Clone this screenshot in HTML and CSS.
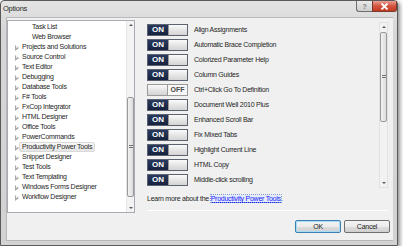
FILE: index.html
```html
<!DOCTYPE html>
<html>
<head>
<meta charset="utf-8">
<link rel="stylesheet" href="styles.css">
</head>
<body>
<div class="window">
  <div class="titlebar">
    <span class="title">Options</span>
    <div class="caption">
      <div class="cbtn help">?</div>
      <div class="cbtn close">
        <svg width="9" height="7" viewBox="0 0 9 7"><path d="M1.5 0.5 L7.5 6.5 M7.5 0.5 L1.5 6.5" stroke="#fff" stroke-width="1.8"/></svg>
      </div>
    </div>
  </div>
  <div class="client">
    <div class="main">
      <div class="tree">
        <ul class="items">
          <li class="leaf">Task List</li>
          <li class="leaf">Web Browser</li>
          <li class="node"><i class="arr"></i>Projects and Solutions</li>
          <li class="node"><i class="arr"></i>Source Control</li>
          <li class="node"><i class="arr"></i>Text Editor</li>
          <li class="node"><i class="arr"></i>Debugging</li>
          <li class="node"><i class="arr"></i>Database Tools</li>
          <li class="node"><i class="arr"></i>F# Tools</li>
          <li class="node"><i class="arr"></i>FxCop Integrator</li>
          <li class="node"><i class="arr"></i>HTML Designer</li>
          <li class="node"><i class="arr"></i>Office Tools</li>
          <li class="node"><i class="arr"></i>PowerCommands</li>
          <li class="node"><i class="arr"></i><span class="sel">Productivity Power Tools</span></li>
          <li class="node"><i class="arr"></i>Snippet Designer</li>
          <li class="node"><i class="arr"></i>Test Tools</li>
          <li class="node"><i class="arr"></i>Text Templating</li>
          <li class="node"><i class="arr"></i>Windows Forms Designer</li>
          <li class="node"><i class="arr"></i>Workflow Designer</li>
        </ul>
        <div class="vscroll tree-scroll">
          <div class="sarrow"><i class="up"></i></div>
          <div class="track"><div class="thumb"><i class="grip"></i></div></div>
          <div class="sarrow"><i class="down"></i></div>
        </div>
      </div>
      <div class="pane">
        <div class="panel">
          <div class="list">
            <div class="row"><span class="toggle"><b class="on">ON</b><span class="knob"></span></span><span class="lbl">Align Assignments</span></div>
            <div class="row"><span class="toggle"><b class="on">ON</b><span class="knob"></span></span><span class="lbl">Automatic Brace Completion</span></div>
            <div class="row"><span class="toggle"><b class="on">ON</b><span class="knob"></span></span><span class="lbl">Colorized Parameter Help</span></div>
            <div class="row"><span class="toggle"><b class="on">ON</b><span class="knob"></span></span><span class="lbl">Column Guides</span></div>
            <div class="row"><span class="toggle is-off"><span class="knob"></span><b class="off">OFF</b></span><span class="lbl">Ctrl+Click Go To Definition</span></div>
            <div class="row"><span class="toggle"><b class="on">ON</b><span class="knob"></span></span><span class="lbl">Document Well 2010 Plus</span></div>
            <div class="row"><span class="toggle"><b class="on">ON</b><span class="knob"></span></span><span class="lbl">Enhanced Scroll Bar</span></div>
            <div class="row"><span class="toggle"><b class="on">ON</b><span class="knob"></span></span><span class="lbl">Fix Mixed Tabs</span></div>
            <div class="row"><span class="toggle"><b class="on">ON</b><span class="knob"></span></span><span class="lbl">Highlight Current Line</span></div>
            <div class="row"><span class="toggle"><b class="on">ON</b><span class="knob"></span></span><span class="lbl">HTML Copy</span></div>
            <div class="row"><span class="toggle"><b class="on">ON</b><span class="knob"></span></span><span class="lbl">Middle-click scrolling</span></div>
          </div>
          <div class="vscroll pane-scroll">
            <div class="sarrow"><i class="up"></i></div>
            <div class="track"><div class="thumb"><i class="grip"></i></div></div>
            <div class="sarrow"><i class="down"></i></div>
          </div>
        </div>
        <p class="learn">Learn more about the <a class="link" href="#">Productivity Power Tools</a>.</p>
        <div class="sep"></div>
      </div>
    </div>
    <div class="footer">
      <button class="btn default">OK</button>
      <button class="btn">Cancel</button>
    </div>
  </div>
</div>
</body>
</html>
```

FILE: styles.css
```css
* { box-sizing: border-box; }
html, body { margin: 0; padding: 0; background: #ffffff; }
body {
  font-family: "Liberation Sans", Arial, sans-serif;
  font-size: 7px;
  letter-spacing: -0.25px;
  color: #1e1e1e;
}
.window {
  width: 398px;
  height: 246px;
  border: 1px solid #5a5a5a;
  border-radius: 4px 4px 0 0;
  background: linear-gradient(#e4e4e4, #d6d6d6 30px, #d2d2d2);
  box-shadow: 2px 2px 4px rgba(0,0,0,0.45);
  padding: 0 4px 4px 5px;
  display: flex;
  flex-direction: column;
}
.titlebar {
  height: 16px;
  display: flex;
  justify-content: space-between;
  margin-right: -4px;
  flex: none;
}
.title {
  align-self: center;
  margin-left: -3px;
  padding-bottom: 1px;
  font-size: 7.5px;
  color: #2a2a2a;
}
.caption { display: flex; align-self: flex-start; }
.cbtn {
  height: 11px;
  border: 1px solid #6d6d6d;
  border-top: none;
  display: flex;
  align-items: center;
  justify-content: center;
}
.help {
  width: 16px;
  border-radius: 0 0 0 3px;
  border-right: none;
  background: linear-gradient(#e9e9e9, #cfcfcf);
  color: #7b7b7b;
  font-size: 7px;
  font-weight: bold;
}
.close {
  width: 25px;
  border-radius: 0 0 3px 0;
  background: linear-gradient(#e8a094, #d5543f 50%, #c23a22);
  border-color: #7a3a30;
}
.client {
  flex: 1;
  background: #f0f0f0;
  border: 1px solid #b8b8b8;
  border-right: none;
  padding: 2px 3px 0 0;
  display: flex;
  flex-direction: column;
}
.main { display: flex; }
.tree {
  width: 128px;
  height: 193px;
  background: #ffffff;
  border: 1px solid #a8abb2;
  display: flex;
}
.items {
  list-style: none;
  margin: 0;
  padding: 1px 0 0 0;
  flex: 1;
}
.items li {
  height: 10px;
  line-height: 10px;
  white-space: nowrap;
  display: flex;
  align-items: center;
  color: #262626;
}
.leaf { padding-left: 24px; }
.node { padding-left: 7px; }
.arr {
  width: 7px;
  height: 10px;
  flex: none;
  position: relative;
}
.arr::before {
  content: "";
  position: absolute;
  left: 0;
  top: 2.5px;
  width: 0; height: 0;
  border-left: 4px solid #a9a9a9;
  border-top: 3px solid transparent;
  border-bottom: 3px solid transparent;
}
.arr::after {
  content: "";
  position: absolute;
  left: 1px;
  top: 4px;
  width: 0; height: 0;
  border-left: 2px solid #ffffff;
  border-top: 1.5px solid transparent;
  border-bottom: 1.5px solid transparent;
}
.sel {
  margin-left: -3px;
  padding: 0 2px;
  height: 10px;
  line-height: 8px;
  border: 1px solid #d9d9d9;
  border-radius: 2px;
  background: linear-gradient(#f8f8f8, #e5e5e5);
}
.vscroll {
  width: 8px;
  display: flex;
  flex-direction: column;
  background: #f3f3f3;
  border-left: 1px solid #e6e6e6;
  flex: none;
}
.sarrow {
  height: 8px;
  display: flex;
  align-items: center;
  justify-content: center;
  flex: none;
}
.up, .down { width: 0; height: 0; border-left: 2px solid transparent; border-right: 2px solid transparent; }
.up { border-bottom: 2px solid #5a5a5a; }
.down { border-top: 2px solid #5a5a5a; }
.track { flex: 1; display: flex; flex-direction: column; }
.thumb {
  border: 1px solid #9a9a9a;
  border-radius: 2px;
  background: linear-gradient(90deg, #f2f2f2, #dcdcdc);
  display: flex;
  align-items: center;
  justify-content: center;
}
.grip {
  width: 4px;
  height: 4px;
  background: repeating-linear-gradient(#707070 0 1px, #e8e8e8 1px 2px);
}
.tree-scroll .track { padding-top: 68px; }
.tree-scroll .thumb { height: 100px; }
.pane {
  margin-left: 12px;
  width: 241px;
  display: flex;
  flex-direction: column;
}
.panel {
  margin-top: 2px;
  height: 166px;
  display: flex;
}
.list { flex: 1; padding-top: 2px; }
.pane-scroll {
  width: 9px;
  border: 1px solid #e2e2e2;
  background: #f2f2f2;
}
.pane-scroll .track { padding-top: 1px; }
.pane-scroll .thumb { height: 90px; }
.row {
  height: 15px;
  display: flex;
  align-items: flex-start;
}
.toggle {
  width: 41px;
  height: 12px;
  border: 1px solid #5d6270;
  display: flex;
  flex: none;
}
.on {
  width: 20px;
  background: linear-gradient(#2a3a5e, #16223e);
  color: #ffffff;
  font-size: 8px;
  letter-spacing: 0;
  line-height: 10px;
  text-align: center;
  font-weight: bold;
}
.knob {
  flex: 1;
  background: linear-gradient(#fbfbfb, #e6e6e6 50%, #d4d4d4);
  border-left: 1px solid #9a9a9a;
}
.is-off { border-color: #9a9a9a; }
.is-off .knob { width: 20px; flex: none; border-left: none; border-right: 1px solid #9a9a9a; }
.off {
  flex: 1;
  background: #f7f7f7;
  color: #4a4a4a;
  font-size: 7px;
  letter-spacing: 0;
  line-height: 10px;
  text-align: center;
  font-weight: bold;
}
.lbl {
  margin-left: 6px;
  line-height: 12px;
  white-space: nowrap;
}
.learn {
  margin: 6px 0 0 0;
  line-height: 10px;
  white-space: nowrap;
}
.link {
  color: #1a1aff;
  text-decoration: underline;
  outline: 1px dotted #7a9ad0;
  background: #e4ecfb;
}
.sep {
  margin-top: 6px;
  height: 1px;
  background: #d0d0d0;
  border-bottom: 1px solid #ffffff;
}
.footer {
  display: flex;
  justify-content: flex-end;
  gap: 3px;
  padding-top: 7px;
}
.btn {
  height: 13px;
  width: 46px;
  padding: 0;
  font-family: inherit;
  font-size: 7px;
  letter-spacing: -0.25px;
  color: #1e1e1e;
  border: 1px solid #707070;
  border-radius: 2px;
  background: linear-gradient(#f3f3f3, #ebebeb 50%, #dddddd 51%, #cfcfcf);
}
.btn.default {
  border-color: #3c7fb1;
  box-shadow: inset 0 0 0 1px #a8dcf6;
}
```
